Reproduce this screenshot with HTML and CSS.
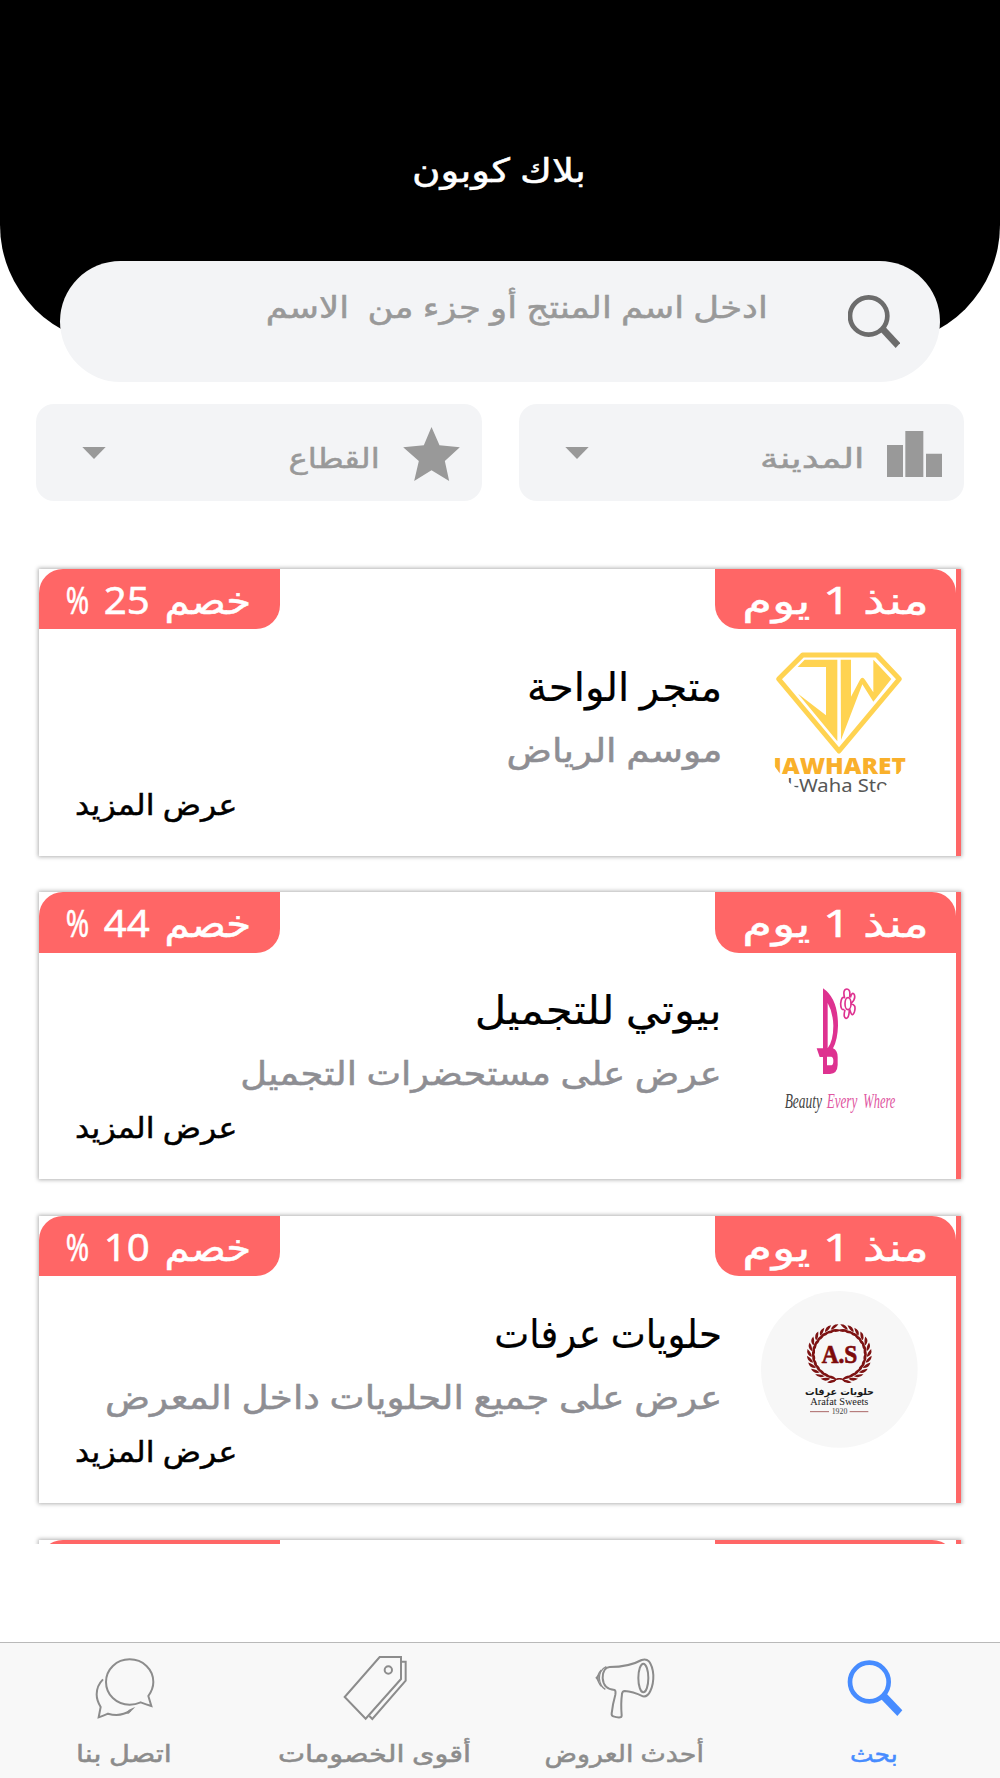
FILE: index.html
```html
<!DOCTYPE html>
<html lang="ar" dir="rtl">
<head>
<meta charset="utf-8">
<title>بلاك كوبون</title>
<link rel="stylesheet" href="styles.css">
</head>
<body>
<div class="screen">
  <header class="hero">
    <h1 class="hero-title"><span class="fit fit-brand">بلاك كوبون</span></h1>
  </header>

  <div class="search">
    <svg class="search-icon" viewBox="0 0 156 159"><circle cx="62" cy="63" r="56" fill="none" stroke="#6c6c6c" stroke-width="14"/><path d="M95 107L110 94L157 144L143 159Z" fill="#6c6c6c"/></svg>
    <div class="search-hint"><span class="fit fit-hint">ادخل اسم المنتج أو جزء من &nbsp;الاسم</span></div>
  </div>

  <div class="filters">
    <div class="filter">
      <svg class="icon-city" viewBox="0 0 165 138"><path d="M0 42h48v96H0zM55 0h54v138H55zM117 68h48v70h-48z" fill="#999"/></svg>
      <div class="filter-label"><span class="fit fit-city">المدينة</span></div>
      <svg class="caret" viewBox="0 0 72 37"><path d="M0 0h72L36 37z" fill="#999"/></svg>
    </div>
    <div class="filter">
      <svg class="icon-star" viewBox="0 0 170 162"><path d="M85 0L109 55L170 61L125 102L138 162L85 130L33 162L47 102L0 61L62 55Z" fill="#999"/></svg>
      <div class="filter-label"><span class="fit fit-sector">القطاع</span></div>
      <svg class="caret" viewBox="0 0 72 37"><path d="M0 0h72L36 37z" fill="#999"/></svg>
    </div>
  </div>

  <main class="offers">
    <article class="card">
      <div class="badges">
        <div class="badge badge-time"><span class="fit fit-time">منذ 1 يوم</span></div>
        <div class="badge badge-off"><span class="fit fit-off">خصم 25 <span class="pct">%</span></span></div>
      </div>
      <div class="card-body">
        <svg class="logo" viewBox="783 282 471 471">
          <defs><clipPath id="round"><circle cx="1018" cy="517" r="235"/></clipPath></defs>
          <path d="M908 315H1130L1198 387L1017 603L836 387Z" fill="none" stroke="#ffd351" stroke-width="15" stroke-linejoin="round"/>
          <path d="M914 329H1012V574L894 431L978 496V351H893Z M1022 329H1053V440L1080 389Q1087 378 1095 389L1120 427V329L1174 387L1120 455L1087 403L1023 570Z" fill="#ffd351"/>
          <g clip-path="url(#round)" direction="ltr">
            <text x="820" y="671" class="jewel-name" textLength="398" lengthAdjust="spacingAndGlyphs">JAWHARET</text>
            <text x="823" y="726" class="jewel-sub" textLength="400" lengthAdjust="spacingAndGlyphs">Al-Waha Store</text>
          </g>
        </svg>
        <div class="info">
          <h2 class="name"><span class="fit fit-name1">متجر الواحة</span></h2>
          <p class="desc"><span class="fit fit-desc1">موسم الرياض</span></p>
          <a class="more"><span class="fit fit-more">عرض المزيد</span></a>
        </div>
      </div>
    </article>

    <article class="card">
      <div class="badges">
        <div class="badge badge-time"><span class="fit fit-time">منذ 1 يوم</span></div>
        <div class="badge badge-off"><span class="fit fit-off">خصم 44 <span class="pct">%</span></span></div>
      </div>
      <div class="card-body">
        <svg class="logo" viewBox="63 22 471 471">
          <path fill-rule="evenodd" d="M249 86Q294 116 294 198Q293 240 279 266Q293 272 293 292V316Q292 342 270 343H249V292H239L230 266H249Z M263 130V266Q280 242 280 198Q279 158 263 130Z M261 291V317H274Q280 316 280 304Q280 292 274 291Z" fill="#de3290"/>
          <g fill="none" stroke="#de3290" stroke-width="5">
            <ellipse cx="324" cy="132" rx="9" ry="18"/>
            <path d="M314 116Q307 88 321 88Q332 88 329 113M331 114Q336 94 343 105Q348 119 333 131M333 133Q350 134 343 157Q336 176 329 149M328 151Q327 176 318 176Q309 174 315 150M313 149Q302 153 302 132Q304 108 314 114"/>
          </g>
          <g direction="ltr">
            <text x="134" y="445" class="script ink" textLength="112" lengthAdjust="spacingAndGlyphs">Beauty</text>
            <text x="260" y="445" class="script pink" textLength="92" lengthAdjust="spacingAndGlyphs">Every</text>
            <text x="370" y="445" class="script pink" textLength="96" lengthAdjust="spacingAndGlyphs">Where</text>
          </g>
        </svg>
        <div class="info">
          <h2 class="name"><span class="fit fit-name2">بيوتي للتجميل</span></h2>
          <p class="desc"><span class="fit fit-desc2">عرض على مستحضرات التجميل</span></p>
          <a class="more"><span class="fit fit-more">عرض المزيد</span></a>
        </div>
      </div>
    </article>

    <article class="card">
      <div class="badges">
        <div class="badge badge-time"><span class="fit fit-time">منذ 1 يوم</span></div>
        <div class="badge badge-off"><span class="fit fit-off">خصم 10 <span class="pct">%</span></span></div>
      </div>
      <div class="card-body">
        <svg class="logo" viewBox="63 62 471 471">
          <defs>
            <g id="leaf"><path d="M3 83Q-10 82 -24 94Q-6 100 3 83ZM3 81Q-8 68 -26 73Q-12 86 3 81Z"/></g>
            <g id="branch">
              <use href="#leaf" transform="rotate(8)"/><use href="#leaf" transform="rotate(21)"/><use href="#leaf" transform="rotate(34)"/><use href="#leaf" transform="rotate(47)"/><use href="#leaf" transform="rotate(60)"/><use href="#leaf" transform="rotate(73)"/><use href="#leaf" transform="rotate(86)"/><use href="#leaf" transform="rotate(99)"/><use href="#leaf" transform="rotate(112)"/><use href="#leaf" transform="rotate(125)"/><use href="#leaf" transform="rotate(138)"/><use href="#leaf" transform="rotate(151)"/><use href="#leaf" transform="rotate(164)"/>
              <path d="M22 86Q5 72 -8 78L-6 82Q6 76 17 89Z"/>
            </g>
          </defs>
          <circle cx="298" cy="297" r="235" fill="#f7f7f7"/>
          <g fill="#7d1212" transform="translate(298 252) scale(1 .93)"><use href="#branch"/><use href="#branch" transform="scale(-1 1)"/></g>
          <g direction="ltr">
            <text x="245" y="278" class="initials" textLength="107" lengthAdjust="spacingAndGlyphs">A.S</text>
            <text x="211" y="405" class="sweets" textLength="174" lengthAdjust="spacingAndGlyphs">Arafat Sweets</text>
            <text x="275" y="431" class="year" textLength="47" lengthAdjust="spacingAndGlyphs">1920</text>
          </g>
          <text x="402" y="373" class="sweets-ar" textLength="207" lengthAdjust="spacingAndGlyphs">حلويات عرفات</text>
          <path d="M210 424h57M329 424h56" stroke="#a66" stroke-width="3"/>
        </svg>
        <div class="info">
          <h2 class="name"><span class="fit fit-name3">حلويات عرفات</span></h2>
          <p class="desc"><span class="fit fit-desc3">عرض على جميع الحلويات داخل المعرض</span></p>
          <a class="more"><span class="fit fit-more">عرض المزيد</span></a>
        </div>
      </div>
    </article>

    <article class="card">
      <div class="badges">
        <div class="badge badge-time"></div>
        <div class="badge badge-off"></div>
      </div>
    </article>
  </main>

  <nav class="tabs">
    <a class="tab tab-active">
      <svg class="tab-icon" viewBox="1029 462 192 204"><circle cx="1108" cy="546" r="58" fill="none" stroke="#478cff" stroke-width="14"/><path d="M1143 597L1160 581L1207 631L1192 648Z" fill="#478cff"/></svg>
      <span class="tab-label"><span class="fit fit-tab1">بحث</span></span>
    </a>
    <a class="tab">
      <svg class="tab-icon" viewBox="278 462 192 204">
        <g fill="none" stroke="#8c8c8c" stroke-width="6" stroke-linejoin="round">
          <path d="M328 501Q307 503 307 534Q309 568 343 570Q347 573 345 584Q337 612 334 640Q333 647 339 649Q350 653 360 652Q364 652 364 646Q361 610 365 582Q366 573 373 573Q397 574 428 589Q442 591 450 573Q460 552 459 525Q457 498 446 484Q437 475 424 480Q386 501 328 501Z"/>
          <ellipse cx="429" cy="534" rx="15" ry="43"/>
          <path d="M318 500Q297 510 297 535Q299 559 315 568" stroke-width="4"/>
          <path d="M303 510Q292 522 292 535Q292 547 303 559" stroke-width="4"/>
        </g>
        <path d="M295 522L285 533L295 547Z" fill="#8c8c8c"/>
      </svg>
      <span class="tab-label"><span class="fit fit-tab2">أحدث العروض</span></span>
    </a>
    <a class="tab">
      <svg class="tab-icon" viewBox="1029 462 192 204">
        <g fill="none" stroke="#8c8c8c" stroke-width="6">
          <path d="M1139 471H1203V537L1097 656L1034 591Z"/>
          <path d="M1204 485H1217V542L1117 657L1108 648"/>
          <circle cx="1165" cy="510" r="11"/>
        </g>
      </svg>
      <span class="tab-label"><span class="fit fit-tab3">أقوى الخصومات</span></span>
    </a>
    <a class="tab">
      <svg class="tab-icon" viewBox="278 462 192 204">
        <g fill="none" stroke="#8c8c8c" stroke-width="6">
          <path d="M453 618Q438 613 421 607Q405 614 388 614C348 614 317 584 317 546C317 508 348 478 388 478C428 478 459 508 459 546Q459 567 444 588Z"/>
          <path d="M308 538Q289 557 289 583Q289 602 301 621L295 652Q309 647 323 641Q360 652 390 632"/>
        </g>
        <path d="M405 621Q388 625 376 640L385 641Z" fill="#8c8c8c"/>
      </svg>
      <span class="tab-label"><span class="fit fit-tab4">اتصل بنا</span></span>
    </a>
  </nav>
</div>
</body>
</html>
```
FILE: styles.css
```css
* { box-sizing: border-box; }
body { margin: 0; background: #fff; font-family: "Noto Sans", "DejaVu Sans", sans-serif; }
h1, h2, p { margin: 0; font-weight: 400; }
svg { display: block; flex: none; }

.screen { width: 1000px; height: 1778px; display: flex; flex-direction: column; overflow: hidden; }

/* Horizontal stretch of each label */
.fit { display: inline-block; white-space: nowrap; transform: scaleX(var(--sx, 1)); transform-origin: right center; -webkit-text-stroke: .5px currentColor; }
.fit-brand { --sx: 1.175; transform-origin: center; }
.fit-hint { --sx: 1.182; }
.fit-city { --sx: 1.33; }
.fit-sector { --sx: 1.16; }
.fit-time { --sx: 1.27; transform-origin: center; }
.fit-off { --sx: 1.06; transform-origin: center; word-spacing: 4px; }
.fit-name1 { --sx: 1.01; }
.fit-name2 { --sx: 1.085; }
.fit-name3 { --sx: .93; }
.fit-desc1 { --sx: 1.14; }
.fit-desc2 { --sx: 1.115; }
.fit-desc3 { --sx: 1.13; }
.fit-more { --sx: 1.09; transform-origin: left center; }
.fit-tab1 { --sx: 1.04; transform-origin: center; }
.fit-tab2 { --sx: 1.12; transform-origin: center; }
.fit-tab3 { --sx: 1.2; transform-origin: center; }
.fit-tab4 { --sx: 1.2; transform-origin: center; }
.pct { display: inline-block; width: 22px; direction: ltr; transform: scaleX(.7); transform-origin: left center; }

.hero { flex: none; height: 344px; padding-top: 150px; background: #000; border-radius: 0 0 119px 119px; text-align: center; }
.hero-title { font-size: 33px; line-height: 40px; color: #fff; padding-right: 2px; }

.search { flex: none; display: flex; align-items: flex-start; width: 880px; height: 121px; margin: -83px 60px 0 0; padding-right: 40px; background: #f3f4f6; border-radius: 61px; }
.search-icon { width: 52px; height: 53px; margin-top: 34px; }
.search-hint { margin-right: 80px; font-size: 30px; line-height: 91px; color: #999; }

.filters { flex: none; display: flex; gap: 37px; margin-top: 22px; padding: 0 36px; }
.filter { flex: 1; height: 97px; display: flex; align-items: flex-start; padding: 0 22px 0 46px; background: #f3f4f6; border-radius: 18px; }
.icon-city { width: 55px; height: 46px; margin-top: 27px; }
.icon-star { width: 57px; height: 54px; margin-top: 23px; }
.filter-label { flex: 1; margin-right: 23px; padding-top: 8px; font-size: 28px; line-height: 90px; color: #999; }
.caret { width: 24px; height: 12px; margin-top: 43px; }

.offers { flex: none; height: 1003.7px; margin-top: 39px; padding: 28.7px 39px 0; display: flex; flex-direction: column; gap: 36.65px; overflow: hidden; }
.card { flex: none; height: 287px; background: #fff; border-right: 5px solid #f66; box-shadow: 0 0 4px 1px rgba(0, 0, 0, .3); }
.badges { display: flex; justify-content: space-between; }
.badge { width: 241px; height: 60.5px; background: #f66; color: #fff; font-size: 38px; line-height: 60px; text-align: center; white-space: nowrap; }
.badge-time { border-radius: 0 24px 0 24px; }
.badge-off { border-radius: 24px 0 24px 0; padding-right: 3px; }
.card-body { display: flex; align-items: flex-start; padding: 14.5px 38px 0 36px; }
.logo { width: 157px; height: 157px; }
.info { flex: 1; display: flex; flex-direction: column; margin-right: 39px; padding-top: 12px; }
.name { font-size: 40px; line-height: 60px; color: #000; }
.name .fit { -webkit-text-stroke-width: .2px; }
.desc { margin-top: 2px; font-size: 33px; line-height: 63px; color: #8e8e93; }
.more { align-self: flex-end; margin-top: 1px; font-size: 29px; line-height: 44px; color: #000; }

.jewel-name { font: 800 68px "Open Sans", "Noto Sans", sans-serif; fill: #f9b02b; }
.jewel-sub { font: 400 54px "Noto Sans", sans-serif; fill: #575756; }
.script { font: italic 400 62px "Liberation Serif", serif; }
.ink { fill: #444; }
.pink { fill: #e0559f; }
.initials { font: 700 78px "Liberation Serif", serif; fill: #7d0a0a; stroke: #7d0a0a; stroke-width: 2; }
.sweets { font: 400 30px "Liberation Serif", serif; fill: #222; }
.year { font: 400 23px "Liberation Serif", serif; fill: #444; }
.sweets-ar { font: 700 29px "DejaVu Sans", sans-serif; fill: #1a1a1a; }

.tabs { flex: none; height: 136px; margin-top: auto; padding: 0; display: flex; background: #f8f8f8; border-top: 1px solid #b9b9b9; }
.tab { flex: 1; display: flex; flex-direction: column; align-items: center; padding-top: 11px; color: #8c8c8c; }
.tab-active { color: #478cff; }
.tab-icon { width: 64px; height: 68px; }
.tab-label { margin-top: 11px; padding-left: 0; padding-right: 2px; font-size: 24px; line-height: 40px; }
```
